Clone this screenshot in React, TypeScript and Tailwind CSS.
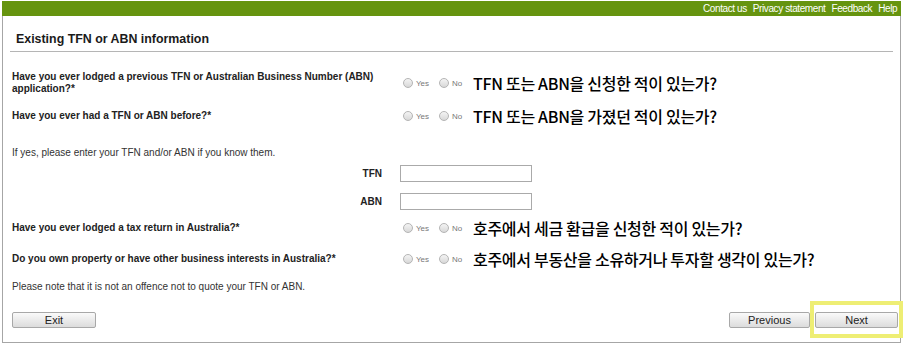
import React from "react";

function Radio({ label }: { label: string }) {
  return (
    <span className="flex items-center">
      <span className="w-[10px] h-[10px] rounded-full border border-[#b4b4b4] bg-gradient-to-b from-[#f4f4f4] to-[#d8d8d8]" />
      <span className="ml-[3px] text-[8px] text-[#777] leading-none mt-[2px]">{label}</span>
    </span>
  );
}

function Question({ text, ko, h, mt }: { text: React.ReactNode; ko: string; h: string; mt: string }) {
  return (
    <div className={`flex items-center ${h} ${mt}`}>
      <div className="w-[398px] pl-[9px] text-[10px] font-bold leading-[12px] text-[#222]">{text}</div>
      <div className="flex items-center gap-[10px] w-[72px] pl-[2px]">
        <Radio label="Yes" />
        <Radio label="No" />
      </div>
      <div
        className="text-[16px] font-medium text-black tracking-[-0.3px]"
        style={{ fontFamily: '"Noto Sans CJK KR", "Noto Sans", sans-serif' }}
      >
        {ko}
      </div>
    </div>
  );
}

function Field({ label, mt }: { label: string; mt: string }) {
  return (
    <div className={`flex items-center h-[20px] ${mt}`}>
      <div className="w-[379px] text-right text-[10px] font-bold text-[#222]">{label}</div>
      <div className="ml-[18px] w-[132px] h-[17px] border border-[#aaa] bg-white" />
    </div>
  );
}

function Btn({ label, w }: { label: string; w: string }) {
  return (
    <div
      className={`${w} h-[16px] flex items-center justify-center rounded-[2px] border border-[#a8a8a8] bg-gradient-to-b from-[#fafafa] to-[#dcdcdc] text-[11px] text-[#222]`}
    >
      {label}
    </div>
  );
}

export default function App() {
  return (
    <div
      className="w-[905px] h-[347px] bg-white overflow-hidden"
      style={{ fontFamily: '"Liberation Sans", Arial, sans-serif' }}
    >
      <div className="ml-[2px] w-[899px] mt-[1px] h-[15px] bg-[#66940f] overflow-hidden flex items-center pl-[701px] gap-[6px] text-[10px] text-white whitespace-nowrap tracking-[-0.4px]">
        <span>Contact us</span>
        <span>Privacy statement</span>
        <span>Feedback</span>
        <span>Help</span>
      </div>
      <div className="ml-[2px] w-[899px] h-[327px] border-l border-r border-b border-[#a6a6a6]">
        <div className="h-[35px] flex items-end pl-[13px] pb-[6px]">
          <h1 className="text-[12.4px] font-bold text-[#1a1a1a] leading-none">Existing TFN or ABN information</h1>
        </div>
        <div className="mx-[7px] h-px bg-[#b5b5b5]" />

        <Question
          mt="mt-[11px]"
          h="h-[40px]"
          text={
            <>
              Have you ever lodged a previous TFN or Australian Business Number (ABN)
              <br />
              application?*
            </>
          }
          ko="TFN 또는 ABN을 신청한 적이 있는가?"
        />
        <Question mt="mt-0" h="h-[26px]" text="Have you ever had a TFN or ABN before?*" ko="TFN 또는 ABN을 가졌던 적이 있는가?" />

        <div className="mt-[12px] h-[22px] flex items-center pl-[9px] text-[10px] text-[#333]">
          If yes, please enter your TFN and/or ABN if you know them.
        </div>

        <Field label="TFN" mt="mt-0" />
        <Field label="ABN" mt="mt-[8px]" />

        <Question mt="mt-[4px]" h="h-[26px]" text="Have you ever lodged a tax return in Australia?*" ko="호주에서 세금 환급을 신청한 적이 있는가?" />
        <Question
          mt="mt-[5px]"
          h="h-[26px]"
          text="Do you own property or have other business interests in Australia?*"
          ko="호주에서 부동산을 소유하거나 투자할 생각이 있는가?"
        />

        <div className="mt-[4px] h-[20px] flex items-center pl-[9px] text-[10px] text-[#333]">
          Please note that it is not an offence not to quote your TFN or ABN.
        </div>

        <div className="mt-[16px] flex items-center pl-[9px] pr-[2px]">
          <Btn label="Exit" w="w-[84px]" />
          <div className="flex-1" />
          <Btn label="Previous" w="w-[81px]" />
          <div className="ml-[5px] relative">
            <Btn label="Next" w="w-[83px]" />
            <div className="absolute -left-[5px] -top-[11px] w-[93px] h-[37px] border-[4px] border-[#eeee74]" />
          </div>
        </div>
      </div>
    </div>
  );
}
